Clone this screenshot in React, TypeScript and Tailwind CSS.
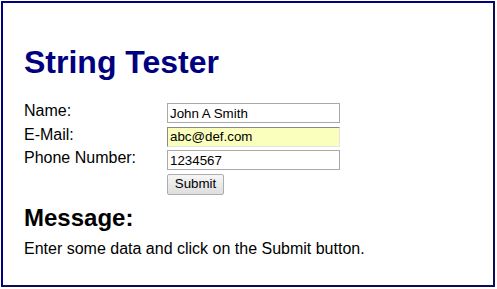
export default function App() {
  const font = { fontFamily: '"Liberation Sans", Arial, sans-serif' };

  return (
    <div className="w-[497px] h-[289px] bg-white p-px" style={font}>
      <div className="h-[286px] w-[494px] border-2 border-t-[#000080] border-l-[#000080] border-r-[#0c0c58] border-b-[#0c0c58] pl-[21px] pt-[41px] text-black">
        <h1 className="text-[32px] leading-[37px] font-bold text-[#000080]">String Tester</h1>

        <div className="mt-[22px] grid grid-cols-[143px_173px] gap-y-[3.5px]">
          <div className="text-[16px] leading-[18px] -mt-px">Name:</div>
          <input
            readOnly
            value="John A Smith"
            className="h-[20px] w-[173px] border border-[#a9a9a9] bg-white px-[2px] text-[13.33px] leading-[16px] outline-none"
          />

          <div className="text-[16px] leading-[18px] -mt-px">E-Mail:</div>
          <input
            readOnly
            value="abc@def.com"
            className="h-[20px] w-[173px] border border-t-[#8a8a8a] border-l-[#8a8a8a] border-r-[#e4e4e4] border-b-[#e4e4e4] bg-[#faffbd] px-[2px] text-[13.33px] leading-[16px] outline-none"
          />

          <div className="text-[16px] leading-[18px] -mt-px">Phone Number:</div>
          <input
            readOnly
            value="1234567"
            className="h-[20px] w-[173px] border border-[#a9a9a9] bg-white px-[2px] text-[13.33px] leading-[16px] outline-none"
          />

          <div />
          <div className="flex">
            <button className="h-[21px] w-[57px] rounded-[2px] border border-[#adadad] bg-gradient-to-b from-[#f6f6f6] to-[#dedede] text-[13.33px] leading-[16px] text-black">
              Submit
            </button>
          </div>
        </div>

        <h2 className="mt-[9px] text-[24px] leading-[28px] font-bold">Message:</h2>
        <p className="mt-[8px] text-[16px] leading-[18px]">Enter some data and click on the Submit button.</p>
      </div>
    </div>
  );
}
